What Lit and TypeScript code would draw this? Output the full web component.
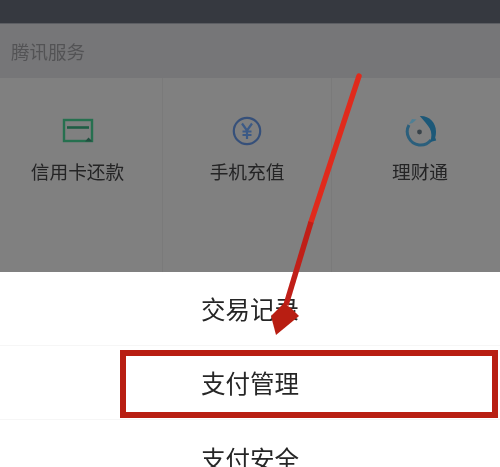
import { LitElement, html, css } from "lit";
import { customElement } from "lit/decorators.js";

const cardIcon = html`<svg width="32" height="26" viewBox="0 0 32 26" fill="none">
  <rect x="2" y="2" width="28" height="21" stroke="#26704f" stroke-width="2.4"/>
  <path d="M5 9.5H27" stroke="#1f5d44" stroke-width="2.6"/>
  <path d="M23 23.5l3.5-4 4 4z" fill="#234f40"/>
</svg>`;
const yenIcon = html`<svg width="32" height="32" viewBox="0 0 32 32" fill="none">
  <circle cx="16" cy="16" r="13.2" stroke="#36507a" stroke-width="2.2"/>
  <path d="M11 8.5l5 7 5-7M16 15.5V24M11.5 16.5h9M11.5 20h9" stroke="#3c5a86" stroke-width="2.2"/>
</svg>`;
const fundIcon = html`<svg width="34" height="32" viewBox="0 0 34 32" fill="none">
  <path d="M6 10A13.5 13.5 0 0 0 16 30a13.500 13.500 0 0 0 12-5" stroke="#2b5f7c" stroke-width="3"/>
  <path d="M17 1c9-.5 16 6.500 16 15.500 0 2.500-.3 4.500-.8 6l1 3-6.200 1.500c2-5 1.800-9.500-.2-13.500-2-3.800-5.800-7.500-10-12.500z" fill="#1c5878"/>
  <path d="M6 9l3-5 4.500.5-4 3.500z" fill="#4f7f94"/>
  <circle cx="16.500" cy="17" r="2.400" fill="#39434a"/>
</svg>`;

@customElement("app-root")
export class AppRoot extends LitElement {
  static styles = css`
    :host {
      display: block;
      position: relative;
      width: 500px;
      height: 467px;
      overflow: hidden;
      background: #fff;
      font-family: "Liberation Sans", "Noto Sans CJK SC", sans-serif;
    }
    .status { height: 23px; background: #363940; border-bottom: 1px solid #5c5e63; }
    .section {
      height: 54px;
      display: flex;
      align-items: center;
      padding-left: 11px;
      background: #767678;
      color: #535355;
      font-size: 18.5px;
    }
    .section span { filter: blur(0.5px); }
    .services {
      height: 194px;
      display: grid;
      grid-template-columns: 163px 169px 168px;
      background: #808080;
    }
    .cell {
      display: flex;
      flex-direction: column;
      align-items: center;
      padding-top: 37px;
      border-right: 1px solid #7a7a7a;
      color: #242425;
      font-size: 18.7px;
      filter: blur(0.5px);
    }
    .cell:last-child { border-right: none; }
    .cell.first { padding-right: 7px; }
    .cell.last { padding-left: 8px; }
    .icon { height: 32px; display: flex; align-items: center; justify-content: center; }
    .label { margin-top: 13px; line-height: 26px; }
    .sheet { background: #fff; }
    .row {
      display: flex;
      align-items: center;
      justify-content: center;
      height: 73px;
      color: #262626;
      font-size: 24.5px;
      border-bottom: 1px solid #f6f6f6;
    }
    .row span { filter: blur(0.45px); }
    .row.last { border-bottom: none; padding-top: 2px; }
    .highlight {
      position: absolute;
      left: 120px;
      top: 350px;
      width: 378px;
      height: 68px;
      box-sizing: border-box;
      border: 6.5px solid #b81e12;
      filter: blur(0.4px);
    }
    .arrow { position: absolute; left: 0; top: 0; filter: blur(0.4px); }
  `;

  render() {
    return html`
      <div class="status"></div>
      <div class="section"><span>腾讯服务</span></div>
      <div class="services">
        <div class="cell first"><div class="icon">${cardIcon}</div><div class="label">信用卡还款</div></div>
        <div class="cell"><div class="icon">${yenIcon}</div><div class="label">手机充值</div></div>
        <div class="cell last"><div class="icon">${fundIcon}</div><div class="label">理财通</div></div>
      </div>
      <div class="sheet">
        <div class="row"><span>交易记录</span></div>
        <div class="row"><span>支付管理</span></div>
        <div class="row last"><span>支付安全</span></div>
      </div>
      <div class="highlight"></div>
      <svg class="arrow" width="500" height="467" viewBox="0 0 500 467">
        <path d="M359 76L311 222" stroke="#e02a1c" stroke-width="5.5" stroke-linecap="round" fill="none"/>
        <path d="M311 222L286 305" stroke="#c01f18" stroke-width="5.5" fill="none"/>
        <path d="M276 335L271 316L284 303L292 309L299 316Z" fill="#b81e12"/>
      </svg>
    `;
  }
}
